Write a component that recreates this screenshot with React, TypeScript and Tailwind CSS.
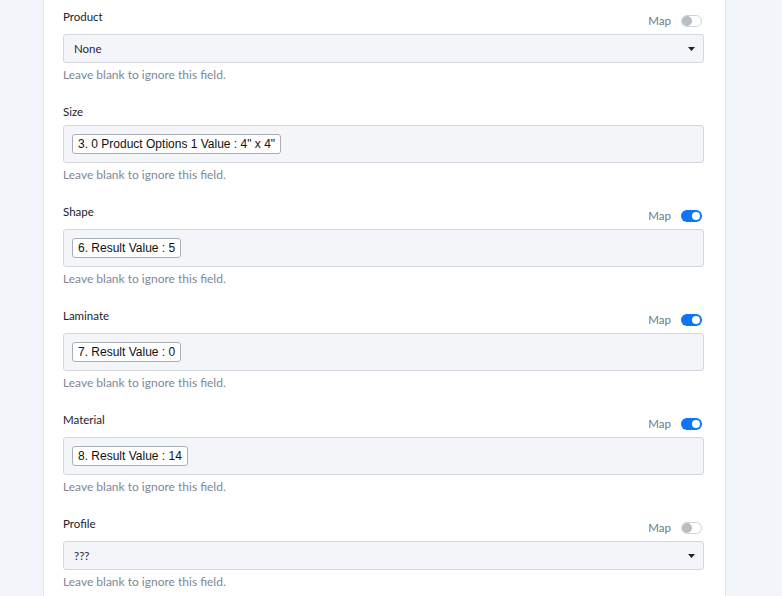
import React from "react";

type Field = {
  label: string;
  kind: "select" | "tags";
  value: string;
  map?: boolean | null; // null = no map toggle
};

const fields: Field[] = [
  { label: "Product", kind: "select", value: "None", map: false },
  { label: "Size", kind: "tags", value: '3. 0 Product Options 1 Value : 4" x 4"', map: null },
  { label: "Shape", kind: "tags", value: "6. Result Value : 5", map: true },
  { label: "Laminate", kind: "tags", value: "7. Result Value : 0", map: true },
  { label: "Material", kind: "tags", value: "8. Result Value : 14", map: true },
  { label: "Profile", kind: "select", value: "???", map: false },
];

function Toggle({ on }: { on: boolean }) {
  return on ? (
    <div className="w-[21px] h-[12px] rounded-full bg-[#0c75f2] flex items-center justify-end pr-[2px]">
      <div className="w-[8px] h-[8px] rounded-full bg-white" />
    </div>
  ) : (
    <div className="w-[21px] h-[12px] rounded-full bg-white border border-[#cfd4da] flex items-center">
      <div className="w-[10px] h-[10px] rounded-full bg-[#b9bec5]" />
    </div>
  );
}

function FieldRow({ field }: { field: Field }) {
  return (
    <div>
      {/* Cabecera: etiqueta + Map */}
      <div className="flex justify-between items-start mb-[5px]">
        <span className="text-[11.5px] leading-4 text-[#1a222d]">{field.label}</span>
        {field.map !== null && field.map !== undefined && (
          <div className="mt-[4px] h-4 flex items-center gap-[10px] pr-[2px]">
            <span className="text-[11.5px] text-[#6d7a8a]">Map</span>
            <Toggle on={field.map} />
          </div>
        )}
      </div>

      {field.kind === "select" ? (
        <div className="h-[29px] bg-[#f3f5f8] border border-[#d3d8de] rounded-[3px] flex items-center justify-between pl-[10px] pr-[8px]">
          <span className="text-[11.5px] text-[#1f2733]">{field.value}</span>
          <svg width="7" height="4" viewBox="0 0 7 4">
            <path d="M0 0 H7 L3.5 4 Z" fill="#222" />
          </svg>
        </div>
      ) : (
        <div className="h-[38px] bg-[#f3f5f8] border border-[#d3d8de] rounded-[3px] flex items-center pl-[8px]">
          <span className="h-[20px] flex items-center px-[5px] bg-white border border-[#a9aeb5] rounded-[3px] text-[12px] text-[#111] [font-family:'Liberation_Sans',Arial,sans-serif]">
            {field.value}
          </span>
        </div>
      )}

      <p className="mt-[4px] text-[12px] leading-4 text-[#7d8896]">Leave blank to ignore this field.</p>
    </div>
  );
}

export default function App() {
  return (
    <div className="w-full h-[596px] overflow-hidden bg-[#f2f5f9] flex [font-family:Lato,'Noto_Sans',sans-serif]">
      <div className="ml-[43px] w-[683px] bg-white border-l border-r border-[#e4e8ee] pt-[9px] pl-[19px] pr-[21px] flex flex-col gap-[21px]">
        {fields.map((f) => (
          <FieldRow key={f.label} field={f} />
        ))}
      </div>
    </div>
  );
}
